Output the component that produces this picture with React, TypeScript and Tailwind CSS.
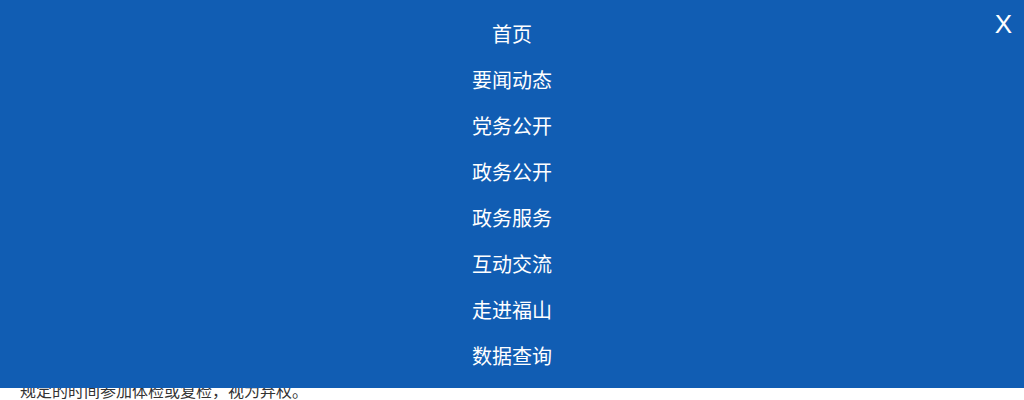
import React from "react";

const MENU = ["首页", "要闻动态", "党务公开", "政务公开", "政务服务", "互动交流", "走进福山", "数据查询"];

export default function App() {
  return (
    <div className="relative h-[400px] w-[1024px] overflow-hidden bg-white font-['Noto_Sans_CJK_SC','Noto_Sans',sans-serif]">
      {/* page content beneath the menu overlay */}
      <div className="px-5 pt-[378px] text-[16px] leading-[24px] text-[#333]">
        规定的时间参加体检或复检，视为弃权。
      </div>

      {/* mobile nav overlay */}
      <div className="absolute inset-x-0 top-0 h-[388px] bg-[#115db3] text-white">
        <ul className="flex flex-col items-center pt-[11px]">
          {MENU.map((m) => (
            <li key={m} className="text-[20px] leading-[46px]">
              {m}
            </li>
          ))}
        </ul>
        <button className="absolute right-[12px] top-[9px] font-['Liberation_Sans',sans-serif] text-[26px] leading-[30px] text-white">
          X
        </button>
      </div>
    </div>
  );
}
